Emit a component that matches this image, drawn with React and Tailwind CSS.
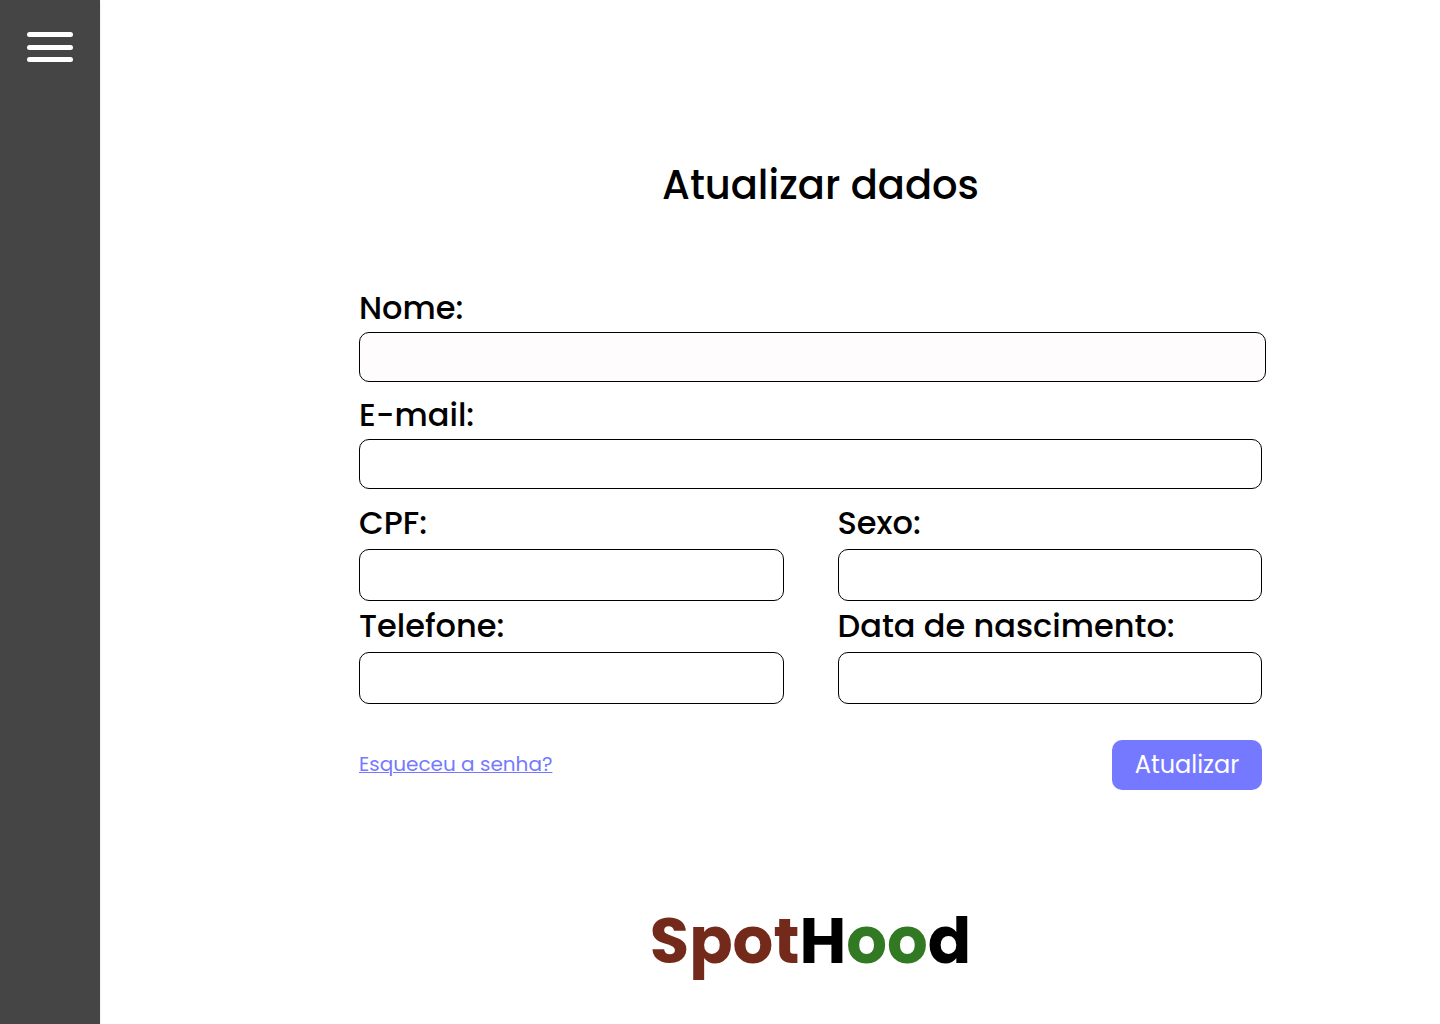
function Field({ id, label, type = "text", labelClass = "", inputClass = "h-[50px]", className = "" }) {
  return (
    <div className={className}>
      <label htmlFor={id} className={`block whitespace-nowrap text-[32px] leading-[48px] font-medium ${labelClass}`}>
        {label}
      </label>
      <input
        id={id}
        type={type}
        className={`block w-full rounded-[10px] border border-black px-4 text-2xl outline-none ${inputClass}`}
      />
    </div>
  );
}

const details = [
  { id: "cpf", label: "CPF:" },
  { id: "sexo", label: "Sexo:" },
  { id: "telefone", label: "Telefone:", type: "tel" },
  { id: "nascimento", label: "Data de nascimento:" },
];

export default function App() {
  return (
    <div className="flex min-h-screen bg-white font-['Poppins','Inter',sans-serif] text-black">
      <aside className="w-[100px] shrink-0 bg-[#454545] pt-8 shadow">
        <button type="button" aria-label="Menu" className="mx-auto flex h-[30px] w-[46px] flex-col justify-between">
          <span className="h-[5px] w-full rounded-full bg-white" />
          <span className="h-[5px] w-full rounded-full bg-white" />
          <span className="h-[5px] w-full rounded-full bg-white" />
        </button>
      </aside>

      <main className="flex-1 pt-[155px] pr-[178px] pl-[259px]">
        <h1 className="pl-5 text-center text-[40px] leading-[60px] font-medium">Atualizar dados</h1>
        <form className="mt-[69px]">
          <Field id="nome" label="Nome:" className="-mr-1" inputClass="h-[50px] bg-[#fffcfd]" />
          <Field id="email" label="E-mail:" type="email" className="mt-[9px]" />
          <div className="mt-[10px] grid grid-cols-2 gap-x-[54px] gap-y-px">
            {details.map((field) => (
              <Field key={field.id} {...field} labelClass="mb-0.5" inputClass="h-[52px]" />
            ))}
          </div>
          <div className="mt-9 flex items-start justify-between">
            <a href="#senha" className="text-xl leading-[48px] text-[#7579ff] underline decoration-1">
              Esqueceu a senha?
            </a>
            <button type="button" className="h-[50px] w-[150px] rounded-[10px] bg-[#7579ff] text-2xl text-white">
              Atualizar
            </button>
          </div>
        </form>
        <p className="mt-[103px] text-center text-[64px] leading-[96px] font-bold">
          <span className="text-[#742a1a]">Spot</span>H<span className="text-[#317a23]">oo</span>d
        </p>
      </main>
    </div>
  );
}
